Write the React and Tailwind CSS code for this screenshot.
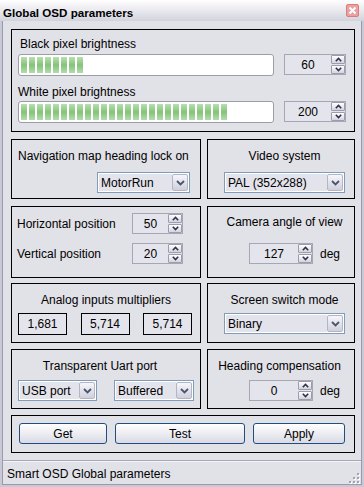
import React from "react";

const Chevron = ({ up }) => (
  <svg width="7" height="5" viewBox="0 0 7 5">
    <path
      d={up ? "M0.8 4.2 L3.5 1.5 L6.2 4.2" : "M0.8 0.8 L3.5 3.5 L6.2 0.8"}
      fill="none"
      stroke="#2e3245"
      strokeWidth="1.6"
    />
  </svg>
);

const SpinBtn = ({ up }) => (
  <div className="flex h-[9px] w-[14px] items-center justify-center rounded-[1px] border border-[#9c9cae] bg-linear-to-b from-white to-[#d4d4df]">
    <Chevron up={up} />
  </div>
);

const Spin = ({ value, className }) => (
  <div className={`flex h-[21px] items-center border border-[#a7a6b5] bg-[#e4e4ec] ${className}`}>
    <span className="flex-1 text-center leading-[14px]">{value}</span>
    <div className="flex flex-col gap-[1px]">
      <SpinBtn up />
      <SpinBtn />
    </div>
  </div>
);

const Combo = ({ value, className }) => (
  <div className={`flex h-[21px] border border-[#7f9db9] bg-white p-[1px] ${className}`}>
    <div className="flex flex-1 items-center bg-[#e3e3eb] pl-[2px] leading-[14px]">{value}</div>
    <div className="flex w-[16px] items-center justify-center rounded-[2px] border border-[#b4b4c6] bg-linear-to-b from-[#f6f6fa] to-[#d0d0dc]">
      <svg width="9" height="6" viewBox="0 0 9 6">
        <path d="M1 1 L4.5 4.5 L8 1" fill="none" stroke="#4a5470" strokeWidth="1.8" />
      </svg>
    </div>
  </div>
);

const Bar = ({ blocks }) => (
  <div className="flex h-[22px] w-[256px] gap-[2px] rounded-[3px] border border-[#9d9da8] bg-white p-[2px]">
    {Array.from({ length: blocks }).map((_, i) => (
      <div
        key={i}
        className="h-full w-[6px] bg-linear-to-b from-[#b9e0b1] via-[#86c27a] to-[#b3dcab]"
      />
    ))}
  </div>
);

const Btn = ({ label, className }) => (
  <div
    className={`flex h-[21px] items-center justify-center rounded-[3px] border border-[#1f4e80] bg-linear-to-b from-white to-[#dadae6] leading-[14px] ${className}`}
  >
    {label}
  </div>
);

const Box = ({ value }) => (
  <div className="flex h-[22px] w-[49px] items-center justify-center border border-black bg-[#e4e4ec] leading-[14px]">
    {value}
  </div>
);

const Group = ({ className, children }) => (
  <div className={`flex flex-col border border-black ${className}`}>{children}</div>
);

const Grip = () => (
  <svg width="11" height="11" viewBox="0 0 11 11">
    {[
      [8, 0],
      [4, 4],
      [8, 4],
      [0, 8],
      [4, 8],
      [8, 8],
    ].map(([x, y]) => (
      <g key={`${x}-${y}`}>
        <rect x={x + 1} y={y + 1} width="2" height="2" fill="#ffffff" />
        <rect x={x} y={y} width="2" height="2" fill="#a2a2b2" />
      </g>
    ))}
  </svg>
);

export default function App() {
  return (
    <div className="flex h-[487px] w-[364px] flex-col bg-[#c8c8d6] font-['Liberation_Sans',Arial,sans-serif] text-[12px] leading-[14px] text-black">
      {/* title bar */}
      <div className="flex h-[21px] items-end justify-between bg-linear-to-b from-white to-[#d3d3de] pb-[1px] pl-[3px] pr-[5px]">
        <span className="text-[11.6px] font-bold leading-[14px]">Global OSD parameters</span>
        <div className="mb-[3px] flex h-[13px] w-[13px] items-center justify-center rounded-[2px] border border-[#d77f7f] bg-[#ec9f9f]">
          <svg width="9" height="9" viewBox="0 0 9 9">
            <path d="M1.5 1.5 L7.5 7.5 M7.5 1.5 L1.5 7.5" stroke="#ffffff" strokeWidth="2" />
          </svg>
        </div>
      </div>

      <div className="mx-[2px] mb-[2px] flex flex-1 flex-col border-x border-b border-[#9a9aac] bg-[#e1e1e8]">
        <div className="flex flex-col pl-[8px] pt-[8px]">
          {/* brightness */}
          <Group className="h-[103px] w-[344px] pl-[6px] pt-[7px]">
            <span className="ml-[2px]">Black pixel brightness</span>
            <div className="mt-[3px] flex items-start">
              <Bar blocks={8} />
              <Spin value="60" className="ml-[10px] w-[62px]" />
            </div>
            <span className="mt-[9px]">White pixel brightness</span>
            <div className="mt-[2px] flex items-start">
              <Bar blocks={26} />
              <Spin value="200" className="ml-[10px] w-[62px]" />
            </div>
          </Group>

          <div className="mt-[7px] flex gap-[6px]">
            <Group className="h-[60px] w-[190px] pl-[6px] pt-[9px]">
              <span>Navigation map heading lock on</span>
              <Combo value="MotorRun" className="ml-auto mr-[10px] mt-[9px] w-[93px]" />
            </Group>
            <Group className="h-[60px] w-[148px] pl-[16px] pr-[9px] pt-[9px]">
              <span className="text-center">Video system</span>
              <Combo value="PAL (352x288)" className="mt-[9px] w-full" />
            </Group>
          </div>

          <div className="mt-[7px] flex gap-[6px]">
            <Group className="h-[72px] w-[190px] pl-[5px] pt-[6px]">
              <div className="flex items-center">
                <span>Horizontal position</span>
                <Spin value="50" className="ml-auto mr-[17px] w-[51px]" />
              </div>
              <div className="mt-[9px] flex items-center">
                <span>Vertical position</span>
                <Spin value="20" className="ml-auto mr-[17px] w-[51px]" />
              </div>
            </Group>
            <Group className="h-[72px] w-[148px] pl-[16px] pr-[9px] pt-[8px]">
              <span className="text-center">Camera angle of view</span>
              <div className="mt-[14px] flex items-center pl-[25px]">
                <Spin value="127" className="w-[64px]" />
                <span className="ml-[7px]">deg</span>
              </div>
            </Group>
          </div>

          <div className="mt-[5px] flex gap-[6px]">
            <Group className="h-[60px] w-[190px] pt-[9px]">
              <span className="text-center">Analog inputs multipliers</span>
              <div className="mt-[6px] flex justify-between pl-[6px] pr-[8px]">
                <Box value="1,681" />
                <Box value="5,714" />
                <Box value="5,714" />
              </div>
            </Group>
            <Group className="h-[60px] w-[148px] pl-[16px] pr-[9px] pt-[9px]">
              <span className="text-center">Screen switch mode</span>
              <Combo value="Binary" className="mt-[6px] w-full" />
            </Group>
          </div>

          <div className="mt-[6px] flex gap-[6px]">
            <Group className="h-[60px] w-[190px] pl-[6px] pt-[9px]">
              <span className="pr-[18px] text-center">Transparent Uart port</span>
              <div className="mt-[7px] flex">
                <Combo value="USB port" className="w-[79px]" />
                <Combo value="Buffered" className="ml-[17px] w-[80px]" />
              </div>
            </Group>
            <Group className="h-[60px] w-[148px] pl-[16px] pr-[9px] pt-[9px]">
              <span className="-ml-[10px] whitespace-nowrap text-center">Heading compensation</span>
              <div className="mt-[7px] flex items-center pl-[25px]">
                <Spin value="0" className="w-[64px]" />
                <span className="ml-[7px]">deg</span>
              </div>
            </Group>
          </div>

          <Group className="mt-[6px] h-[38px] w-[344px] pl-[7px] pt-[7px]">
            <div className="flex">
              <Btn label="Get" className="w-[88px]" />
              <Btn label="Test" className="ml-[8px] w-[130px]" />
              <Btn label="Apply" className="ml-[8px] w-[92px]" />
            </div>
          </Group>
        </div>

        {/* status bar */}
        <div className="mt-auto flex h-[24px] items-start justify-between border-t border-[#a9a9b9] pl-[4px] pt-[6px] shadow-[inset_0_1px_0_#f4f4f8]">
          <span>Smart OSD Global parameters</span>
          <div className="mr-[1px] mt-[6px]">
            <Grip />
          </div>
        </div>
      </div>
    </div>
  );
}
